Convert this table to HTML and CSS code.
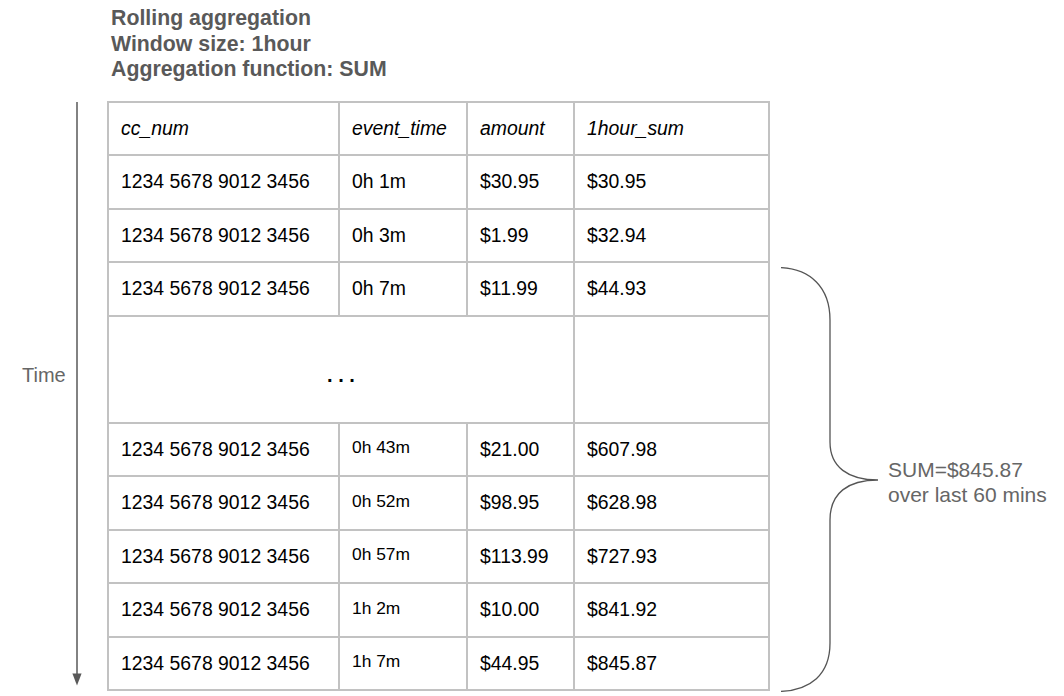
FILE: index.html
```html
<!DOCTYPE html>
<html lang="en">
<head>
<meta charset="utf-8">
<title>Rolling aggregation</title>
<link rel="stylesheet" href="styles.css">
</head>
<body>
<header class="caption">
  <div>Rolling aggregation</div>
  <div>Window size: 1hour</div>
  <div>Aggregation function: SUM</div>
</header>
<main class="diagram">
  <div class="axis">
    <span class="axis-label">Time</span>
    <svg class="axis-arrow" width="12" height="590" viewBox="0 0 12 590">
      <line x1="6" y1="1" x2="6" y2="574" stroke="#595959" stroke-width="1.5"/>
      <polygon points="1.4,572.5 10.6,572.5 6,584.5" fill="#595959"/>
    </svg>
  </div>
  <table class="grid">
    <colgroup>
      <col class="c1"><col class="c2"><col class="c3"><col class="c4">
    </colgroup>
    <thead>
      <tr><th>cc_num</th><th>event_time</th><th>amount</th><th>1hour_sum</th></tr>
    </thead>
    <tbody>
      <tr><td>1234 5678 9012 3456</td><td>0h 1m</td><td>$30.95</td><td>$30.95</td></tr>
      <tr><td>1234 5678 9012 3456</td><td>0h 3m</td><td>$1.99</td><td>$32.94</td></tr>
      <tr><td>1234 5678 9012 3456</td><td>0h 7m</td><td>$11.99</td><td>$44.93</td></tr>
      <tr class="gap"><td colspan="3" class="dots">. . .</td><td></td></tr>
      <tr><td>1234 5678 9012 3456</td><td class="small">0h 43m</td><td>$21.00</td><td>$607.98</td></tr>
      <tr><td>1234 5678 9012 3456</td><td class="small">0h 52m</td><td>$98.95</td><td>$628.98</td></tr>
      <tr><td>1234 5678 9012 3456</td><td class="small">0h 57m</td><td>$113.99</td><td>$727.93</td></tr>
      <tr><td>1234 5678 9012 3456</td><td class="small">1h 2m</td><td>$10.00</td><td>$841.92</td></tr>
      <tr><td>1234 5678 9012 3456</td><td class="small">1h 7m</td><td>$44.95</td><td>$845.87</td></tr>
    </tbody>
  </table>
  <div class="brace">
    <svg class="brace-shape" width="100" height="425" viewBox="0 0 100 425">
      <path d="M1,0.6 C30,2 50,20 50,53 L50,175 C50,200 68,213 98,213 C68,213 50,226 50,253 L50,376 C50,408 30,423 1,424.4" fill="none" stroke="#555" stroke-width="1.3"/>
    </svg>
    <div class="brace-label">SUM=$845.87<br>over last 60 mins</div>
  </div>
</main>
</body>
</html>
```
FILE: styles.css
```css
html, body {
  margin: 0;
  padding: 0;
  background: #fff;
}
body {
  width: 1064px;
  height: 696px;
  overflow: hidden;
  font-family: "Liberation Sans", Arial, sans-serif;
}
.caption {
  padding: 6px 0 0 111px;
  font-size: 21.3px;
  line-height: 25.5px;
  font-weight: bold;
  color: #595959;
}
.diagram {
  display: flex;
  align-items: flex-start;
  margin-top: 18px;
}
.axis {
  display: grid;
  grid-template-columns: 71px 12px;
  width: 107px;
  align-items: start;
}
.axis-label {
  padding-left: 22px;
  margin-top: 263px;
  font-size: 20px;
  line-height: 23px;
  color: #666;
}
.axis-arrow {
  display: block;
}
.grid {
  border-collapse: collapse;
  table-layout: fixed;
  width: 662px;
  font-size: 19.4px;
  color: #000;
}
.c1 { width: 231px; }
.c2 { width: 128px; }
.c3 { width: 107px; }
.c4 { width: 195px; }
.grid th, .grid td {
  border: 2px solid #c2c2c2;
  padding: 0 0 0 12px;
  height: 53.5px;
  box-sizing: border-box;
  text-align: left;
  vertical-align: middle;
  white-space: nowrap;
  font-weight: normal;
}
.grid th {
  font-style: italic;
}
.grid tr.gap td {
  height: 107px;
}
.grid td.dots {
  text-align: center;
  padding: 12px 0 0 0;
  font-weight: bold;
  font-size: 20px;
}
.grid td.small {
  font-size: 17.4px;
  padding-bottom: 3px;
}
.brace {
  display: flex;
  align-items: flex-start;
  margin-left: 10px;
  margin-top: 166.5px;
}
.brace-shape {
  display: block;
  flex: none;
}
.brace-label {
  margin-left: 8px;
  margin-top: 190px;
  font-size: 21px;
  line-height: 25px;
  color: #666;
  white-space: nowrap;
}
```
